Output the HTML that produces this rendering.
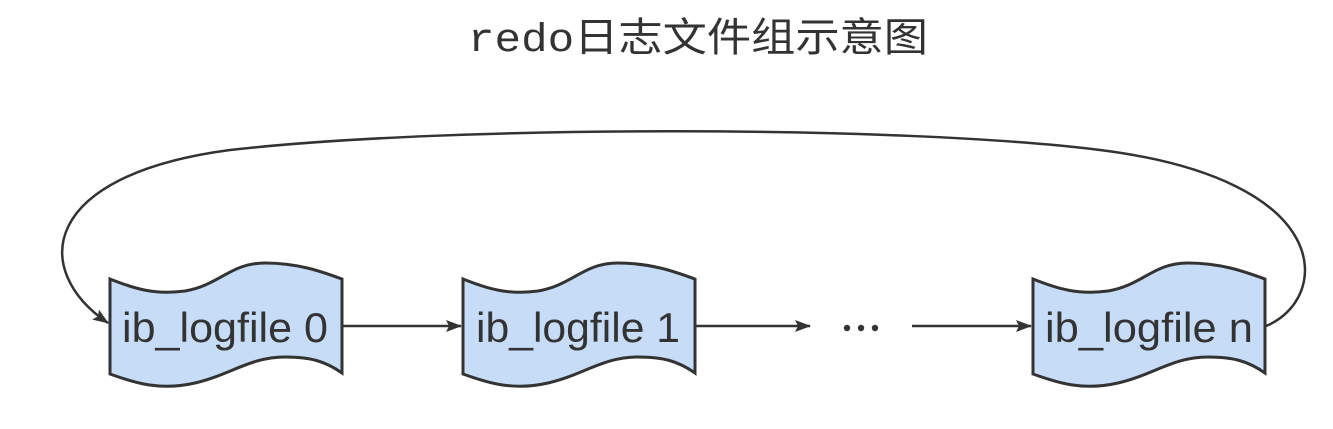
<!DOCTYPE html>
<html><head><meta charset="utf-8"><style>
body{margin:0;background:#fff;width:1333px;height:424px;overflow:hidden}
</style></head><body>
<svg width="1333" height="424" viewBox="0 0 1333 424" xmlns="http://www.w3.org/2000/svg">
<text x="468" y="51" textLength="460" lengthAdjust="spacingAndGlyphs" font-family="'Liberation Mono','Noto Sans CJK SC',monospace" font-size="40" fill="#333">redo日志文件组示意图</text>
<defs>
<g id="doc">
<path d="M0,14 C25,24 45,30 75,26 C110,20 120,-2 155,-2 C190,-2 215,8 232,14 L232,108 C215,96 200,92 175,92 C140,92 120,110 85,118 C50,126 25,118 0,109 Z" fill="#c6dcf7" stroke="#333" stroke-width="3"/>
</g>
<marker id="ar2" markerWidth="16" markerHeight="12" refX="15" refY="6" orient="auto" markerUnits="userSpaceOnUse"><path d="M0,0 L16,6 L0,12 L3,6 Z" fill="#333"/></marker>
</defs>
<use href="#doc" x="110" y="265"/>
<use href="#doc" x="463" y="265"/>
<use href="#doc" x="1033" y="265"/>
<g font-family="'Liberation Sans',sans-serif" font-size="42" fill="#333">
<text x="122" y="342" textLength="206" lengthAdjust="spacingAndGlyphs">ib_logfile 0</text>
<text x="476" y="342" textLength="204" lengthAdjust="spacingAndGlyphs">ib_logfile 1</text>
<text x="1045" y="342" textLength="208" lengthAdjust="spacingAndGlyphs">ib_logfile n</text>
</g>
<g fill="#333"><circle cx="847" cy="328" r="3.2"/><circle cx="861" cy="328" r="3.2"/><circle cx="875" cy="328" r="3.2"/></g>
<g stroke="#333" stroke-width="2.5" fill="none">
<line x1="343" y1="326" x2="461" y2="326" marker-end="url(#ar2)"/>
<line x1="696" y1="326" x2="810" y2="326" marker-end="url(#ar2)"/>
<line x1="912" y1="326" x2="1031" y2="326" marker-end="url(#ar2)"/>
<path d="M1266,326 C1330,300 1340,180 1100,150 C900,125 450,125 230,150 C40,175 30,270 108,323" marker-end="url(#ar2)"/>
</g>
</svg>
</body></html>
